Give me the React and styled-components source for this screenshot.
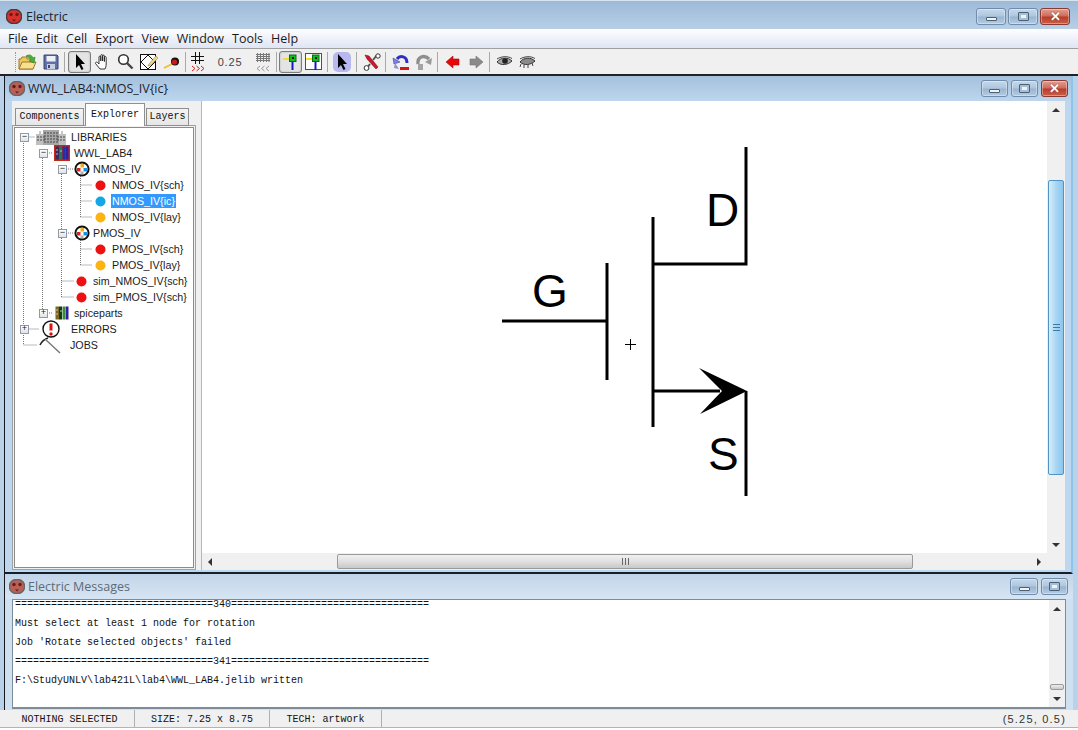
import React from "react";
import styled, { createGlobalStyle } from "styled-components";

const GlobalStyle = createGlobalStyle`
  html, body { margin: 0; padding: 0; background: #b9d1e9; }
  * { box-sizing: border-box; }
`;

const Shell = styled.div`
  width: 1078px;
  height: 730px;
  overflow: hidden;
  display: flex;
  flex-direction: column;
  background: #b9d1e9;
  font-family: "Open Sans", "Liberation Sans", sans-serif;
`;

const TitleBar = styled.div`
  height: 29px;
  flex: none;
  display: flex;
  align-items: center;
  padding: 3px 8px 0 6px;
  background: linear-gradient(#9dbad7, #b7cfe7);
  border-top: 1px solid #d7e3ef;
`;

const TitleText = styled.span`
  margin-left: ${(p) => p.$gap ?? 4}px;
  font-size: 12.5px;
  color: ${(p) => (p.$dim ? "#5d6a78" : "#1c2430")};
  flex: 1;
`;

const WinButtons = styled.div`
  display: flex;
  gap: ${(p) => p.$gap || 2}px;
`;

const WinButton = styled.div`
  width: ${(p) => p.$w || 30}px;
  height: 17px;
  border-radius: 3px;
  border: 1px solid ${(p) => (p.$kind === "close" ? "#8a3a30" : "#6f8dab")};
  display: flex;
  align-items: center;
  justify-content: center;
  background: ${(p) =>
    p.$kind === "close"
      ? "linear-gradient(#e0a094, #cf6a58 48%, #b83c28 52%, #c8604a)"
      : "linear-gradient(#c6d8ea, #aec6de 48%, #98b4d0 52%, #b4cce2)"};
  box-shadow: inset 0 0 0 1px rgba(255, 255, 255, 0.35);
`;

const MinGlyph = styled.i`
  display: block;
  width: 11px;
  height: 4px;
  margin-top: 4px;
  background: #eef3f8;
  border: 1px solid #4d5f73;
  border-radius: 1px;
`;

const MaxGlyph = styled.i`
  display: block;
  width: 11px;
  height: 9px;
  background: #eef3f8;
  border: 1px solid #4d5f73;
  border-radius: 1px;
  box-shadow: inset 0 0 0 2px #a6bfd8;
`;

const CloseGlyph = styled.span`
  font: bold 13px/1 "Liberation Sans", sans-serif;
  color: #fff;
  text-shadow: 0 0 1px #5a2018;
`;

const MenuBar = styled.div`
  height: 20px;
  flex: none;
  display: flex;
  align-items: center;
  gap: 8px;
  padding-left: 8px;
  background: linear-gradient(#ffffff, #f3f5fb 35%, #dfe5f4);
  border-bottom: 1px solid #a0a0a0;
`;

const MenuItem = styled.span`
  font-size: 12.5px;
  color: #1a1a1a;
`;

const ToolBar = styled.div`
  height: 27px;
  flex: none;
  display: flex;
  align-items: center;
  padding-left: 15px;
  background: #f0f0f0;
  border-bottom: 2px solid #1f2226;
`;

const Grip = styled.i`
  display: block;
  width: 1px;
  height: 20px;
  border-left: 1px dotted #999;
`;

const ToolSep = styled.i`
  display: block;
  width: 1px;
  height: 20px;
  margin: 0 ${(p) => p.$r ?? 3}px 0 ${(p) => p.$l ?? 2}px;
  background: #a8a8a8;
`;

const Tool = styled.div`
  width: 23px;
  height: 22px;
  flex: none;
  display: flex;
  align-items: center;
  justify-content: center;
  border-radius: 3px;
  ${(p) =>
    p.$on &&
    `background: #e4e4e4;
     border: 1px solid #7c7c7c;
     box-shadow: inset 0 0 2px #aaa;`}
`;

const GridValue = styled.span`
  width: 42px;
  text-align: center;
  font: 11px "Liberation Sans", sans-serif;
  letter-spacing: 0.8px;
  color: #444;
`;

const Desktop = styled.div`
  flex: 1;
  min-height: 0;
  display: flex;
  flex-direction: column;
  padding: 0 5px 0 4px;
`;

const CadWindow = styled.div`
  height: 498px;
  flex: none;
  display: flex;
  flex-direction: column;
  border-left: 1px solid #14181c;
  border-right: 2px solid #8ec4ea;
  border-bottom: 2px solid #14202c;
  background: #bcd7ef;
`;

const InnerTitle = styled.div`
  height: 25px;
  flex: none;
  display: flex;
  align-items: center;
  padding: 0 3px 0 4px;
  background: linear-gradient(#a4c0dc, #bdd6ee);
`;

const CadBody = styled.div`
  flex: 1;
  min-height: 0;
  display: flex;
  padding: 0 6px 2px 7px;
`;

const SidePanel = styled.div`
  width: 184px;
  flex: none;
  display: flex;
  flex-direction: column;
  background: #f0f0f0;
  padding-top: 2px;
`;

const Tabs = styled.div`
  height: 23px;
  flex: none;
  display: flex;
  align-items: flex-end;
  padding-left: 3px;
`;

const Tab = styled.div`
  position: relative;
  z-index: 1;
  width: ${(p) => p.$w}px;
  height: ${(p) => (p.$active ? 23 : 18)}px;
  margin-right: 1px;
  display: flex;
  align-items: center;
  justify-content: center;
  padding-bottom: 1px;
  font: 10px "Liberation Mono", monospace;
  color: #111;
  background: ${(p) => (p.$active ? "#fff" : "linear-gradient(#f4f4f4, #e6e6e6)")};
  border: 1px solid #8e8f8f;
  border-bottom: ${(p) => (p.$active ? "none" : "1px solid #8e8f8f")};
`;

const TreeFrame = styled.div`
  flex: 1;
  min-height: 0;
  border: 1px solid #a0a0a0;
  padding: 1px;
  background: #f0f0f0;
  margin-top: -1px;
`;

const TreeBox = styled.div`
  position: relative;
  height: 100%;
  background: #fff;
  border: 1px solid #8c8c8c;
  padding-top: 1px;
`;

const TreeLines = styled.svg`
  position: absolute;
  left: 0;
  top: 0;
`;

const TreeRow = styled.div`
  position: relative;
  height: 16px;
  display: flex;
  align-items: center;
  padding-left: ${(p) => p.$pad}px;
`;

const Expander = styled.i`
  display: flex;
  flex: none;
  align-items: center;
  justify-content: center;
  width: 9px;
  height: 9px;
  margin-right: ${(p) => p.$gap}px;
  border: 1px solid #8e9aa6;
  background: linear-gradient(#fff, #dfe3e8);
  font: normal 9px/1 "Liberation Mono", monospace;
  color: #222;
`;

const TreeIcon = styled.span`
  display: flex;
  flex: none;
  justify-content: center;
  width: ${(p) => p.$w}px;
  margin-right: ${(p) => p.$gap}px;
`;

const TreeLabel = styled.span`
  font: 10.7px "Liberation Sans", sans-serif;
  color: ${(p) => (p.$sel ? "#fff" : "#1a1a1a")};
  background: ${(p) => (p.$sel ? "#3399ff" : "transparent")};
  padding: 1px;
  white-space: nowrap;
`;

const Divider = styled.div`
  width: 6px;
  flex: none;
  background: #f0f0f0;
  border-right: 1px solid #b8b8b8;
`;

const CanvasPane = styled.div`
  flex: 1;
  min-width: 0;
  display: grid;
  grid-template-columns: 1fr 18px;
  grid-template-rows: 1fr 17px;
  background: #f0f0f0;
`;

const Canvas = styled.svg`
  display: block;
  width: 100%;
  height: 100%;
  background: #fff;
`;

const VScroll = styled.div`
  display: flex;
  flex-direction: column;
  align-items: stretch;
  background: #f0f0f0;
`;

const HScroll = styled.div`
  display: flex;
  background: #f0f0f0;
`;

const ArrowCell = styled.div`
  width: ${(p) => (p.$h ? "16px" : "auto")};
  height: ${(p) => (p.$h ? "auto" : "17px")};
  flex: none;
  display: flex;
  align-items: center;
  justify-content: center;
`;

const Tri = styled.i`
  display: block;
  width: 0;
  height: 0;
  border-style: solid;
  border-color: transparent;
  ${(p) => p.$dir === "up" && "border-width: 0 4px 4px; border-bottom-color: #333;"}
  ${(p) => p.$dir === "down" && "border-width: 4px 4px 0; border-top-color: #333;"}
  ${(p) => p.$dir === "left" && "border-width: 4px 4px 4px 0; border-right-color: #333;"}
  ${(p) => p.$dir === "right" && "border-width: 4px 0 4px 4px; border-left-color: #333;"}
`;

const ScrollGap = styled.div`
  ${(p) => (p.$size ? `flex: none; ${p.$h ? "width" : "height"}: ${p.$size}px;` : "flex: 1;")}
`;

const VThumb = styled.div`
  height: ${(p) => p.$size}px;
  flex: none;
  margin: 0 1px;
  border: 1px solid ${(p) => (p.$hot ? "#4f94c4" : "#9a9a9a")};
  border-radius: 2px;
  display: flex;
  align-items: center;
  justify-content: center;
  background: ${(p) =>
    p.$hot
      ? "linear-gradient(90deg, #d8eefb, #a8d6f4 50%, #8cc6ee)"
      : "linear-gradient(#eee, #c8c8c8)"};
`;

const HThumb = styled.div`
  width: ${(p) => p.$size}px;
  flex: none;
  margin: 1px 0;
  border: 1px solid #9a9a9a;
  border-radius: 2px;
  display: flex;
  align-items: center;
  justify-content: center;
  background: linear-gradient(#f0f0f0, #e0e0e0 50%, #c8c8c8);
`;

const ThumbGrip = styled.i`
  display: block;
  width: 7px;
  height: 7px;
  background: ${(p) =>
    p.$h
      ? "repeating-linear-gradient(90deg, #666 0 1px, transparent 1px 3px)"
      : "repeating-linear-gradient(#3a7ca8 0 1px, transparent 1px 3px)"};
`;

const MessagesWindow = styled.div`
  flex: 1;
  min-height: 0;
  display: flex;
  flex-direction: column;
  padding-bottom: 1px;
  border-left: 1px solid #14181c;
  background: #cfe0f0;
`;

const MessagesTitle = styled(InnerTitle)`
  padding-right: 5px;
  background: linear-gradient(#c2d5e8, #d6e5f3);
`;

const MessagesBody = styled.div`
  flex: 1;
  min-height: 0;
  display: flex;
  margin: 0 7px 0 7px;
  background: #fff;
  border: 1px solid #7e8b99;
  border-bottom-width: 2px;
`;

const LogText = styled.div`
  flex: 1;
  height: 100%;
  overflow: hidden;
  padding-left: 2px;
  margin-top: -5px;
`;

const LogLine = styled.div`
  height: 19px;
  font: 10px/19px "Liberation Mono", monospace;
  color: #111;
  white-space: pre;
`;

const LogScroll = styled(VScroll)`
  width: 16px;
  flex: none;
`;

const StatusBar = styled.div`
  height: 20px;
  flex: none;
  display: flex;
  padding-left: 5px;
  background: #f0f0f0;
  border-bottom: 2px solid #fff;
  box-shadow: inset 0 -1px 0 #b4b4b4;
`;

const StatusCell = styled.div`
  width: ${(p) => p.$w}px;
  flex: none;
  display: flex;
  align-items: center;
  justify-content: center;
  padding-top: 1px;
  font: 10px "Liberation Mono", monospace;
  color: #111;
  border-right: 1px solid #b0b0b0;
  margin-bottom: 1px;
`;

const Coords = styled.div`
  flex: 1;
  text-align: right;
  padding-right: 12px;
  font: 11px/19px "Liberation Sans", sans-serif;
  letter-spacing: 1.2px;
  color: #333;
`;

/* icons */

const AppIcon = ({ dim }) => (
  <svg width="16" height="15" viewBox="0 0 16 15">
    <rect x="0.5" y="0.5" width="15" height="14" rx="6.5" fill={dim ? "#b86058" : "#d8302c"} stroke={dim ? "#666" : "#4a3a3a"} strokeWidth="1.4" />
    <circle cx="5" cy="5.5" r="1.7" fill="#6b1a18" />
    <circle cx="11" cy="5.5" r="1.7" fill="#6b1a18" />
    <path d="M6 10.5 H10 L8 12.5Z" fill="#6b1a18" />
  </svg>
);

const OpenIcon = () => (
  <svg width="20" height="18" viewBox="0 0 20 18">
    <path d="M1 16 V6 H3 L4 4 H9 V6 H15 V16Z" fill="#f0c860" stroke="#9a7a28" />
    <path d="M1 16 L4 9 H18 L15 16Z" fill="#f8e090" stroke="#9a7a28" />
    <path d="M8 3 C11 1 14 2 15 5 L17 4 L16 10 L11 8 L13 7 C12 5 10 4 8 3Z" fill="#4caf3a" stroke="#2a7a20" strokeWidth="0.6" />
  </svg>
);

const SaveIcon = () => (
  <svg width="16" height="16" viewBox="0 0 16 16">
    <path d="M1 1 H14 L15 2 V15 H1Z" fill="#5f6fa8" stroke="#3c4678" />
    <rect x="3.5" y="2" width="9" height="5.5" fill="#eef0f8" />
    <rect x="4" y="10" width="8" height="5" fill="#c8cee4" />
    <rect x="5" y="11" width="2" height="3" fill="#3c4678" />
  </svg>
);

const PointerIcon = ({ glow }) => (
  <svg width="18" height="20" viewBox="0 0 18 20">
    {glow && <rect x="0" y="0" width="18" height="20" rx="5" fill="#b8b8f0" />}
    <path d="M5 2 V16 L8 13 L10.5 18 L12.5 17 L10 12 H14Z" fill="#000" />
  </svg>
);

const HandIcon = () => (
  <svg width="17" height="18" viewBox="0 0 17 18" fill="#fff" stroke="#222" strokeWidth="0.9">
    <path d="M6 16 L1.5 10.5 C1 9.5 2.5 8.5 3.5 9.5 L5 11 V4 C5 2.8 6.8 2.8 6.8 4 V8 V2.5 C6.8 1.3 8.6 1.3 8.6 2.5 V8 V3 C8.6 1.8 10.4 1.8 10.4 3 V8.5 V4.5 C10.4 3.3 12.2 3.3 12.2 4.5 V11 C12.2 13.5 11.5 15 11 16Z" />
  </svg>
);

const LensIcon = () => (
  <svg width="17" height="17" viewBox="0 0 17 17" fill="none">
    <circle cx="6.5" cy="6.5" r="4.8" stroke="#333" strokeWidth="1.6" fill="#fff" />
    <path d="M10 10 L15.5 15.5" stroke="#444" strokeWidth="2.4" />
  </svg>
);

const EditIcon = () => (
  <svg width="18" height="17" viewBox="0 0 18 17">
    <rect x="0.5" y="1.5" width="15" height="15" fill="#fff" stroke="#111" />
    <path d="M8 2 L15 9 L8 16 L1 9Z" fill="none" stroke="#111" />
    <path d="M9 11 L16 3 L18 5 L11 12 L8 13Z" fill="#f0d890" stroke="#a08838" strokeWidth="0.6" />
  </svg>
);

const ProbeIcon = () => (
  <svg width="18" height="14" viewBox="0 0 18 14">
    <path d="M1 13 L9 9" stroke="#f0c020" strokeWidth="1.6" />
    <circle cx="12" cy="6.5" r="4" fill="#111" />
    <circle cx="11.5" cy="7" r="2.6" fill="#d01818" />
  </svg>
);

const GridIcon = ({ dense }) => (
  <svg width="14" height="20" viewBox="0 0 14 20" fill="none">
    {dense ? (
      <path d="M0 2.5 H14 M0 4.5 H14 M0 6.5 H14 M0 8.5 H14 M1.5 1 V10 M4.5 1 V10 M7.5 1 V10 M10.5 1 V10 M13 1 V10" stroke="#777" />
    ) : (
      <path d="M0 4.5 H13 M0 8.5 H13 M4.5 0 V12 M8.5 0 V12" stroke="#111" />
    )}
    {dense ? (
      <path d="M4 14 L1 16.5 L4 19 M8.5 14 L5.5 16.5 L8.5 19 M13 14 L10 16.5 L13 19" stroke="#999" />
    ) : (
      <path d="M1 14 L4 16.5 L1 19 M5.5 14 L8.5 16.5 L5.5 19 M10 14 L13 16.5 L10 19" stroke="#d02020" />
    )}
  </svg>
);

const NodeIcon = ({ boxed }) => (
  <svg width="17" height="17" viewBox="0 0 17 17">
    {boxed && <rect x="0.5" y="0.5" width="16" height="16" fill="#fff" stroke="#d01818" />}
    <path d="M1 6 H9" stroke="#f4e020" strokeWidth="2" />
    <path d="M10.5 8 V17" stroke="#1818c8" strokeWidth="2" />
    <rect x="7.5" y="2" width="6.5" height="6.5" fill="#10c020" stroke="#0a6a14" />
    <rect x="10" y="4" width="2" height="2" fill="#111" />
  </svg>
);

const ToolsIcon = () => (
  <svg width="18" height="18" viewBox="0 0 18 18" fill="none">
    <path d="M14 2 L10 7 M7 11 L4 15" stroke="#555" strokeWidth="2" />
    <circle cx="15" cy="3" r="2.2" fill="#fff" stroke="#333" />
    <circle cx="3.5" cy="15" r="2.4" fill="#fff" stroke="#333" />
    <path d="M2 2 L6 3 L15 14 L13 16 L4 6Z" fill="#c8182c" stroke="#801020" strokeWidth="0.6" />
  </svg>
);

const UndoIcon = () => (
  <svg width="18" height="18" viewBox="0 0 18 18" fill="none">
    <path d="M15 10 C15 3 8 2 5 6" stroke="#3030c0" strokeWidth="3" />
    <path d="M1 5 L8 9 L2 11Z" fill="#8080e0" stroke="#4040a0" strokeWidth="0.6" />
    <path d="M3 10 L7 16 L2 15Z" fill="#9090d8" />
    <rect x="8" y="14" width="9" height="3" fill="#d01818" />
  </svg>
);

const RedoIcon = () => (
  <svg width="18" height="18" viewBox="0 0 18 18" fill="none">
    <path d="M3 11 C2 4 9 1 14 6" stroke="#8e8e8e" strokeWidth="3.4" />
    <path d="M17 5 L10 9 L16 12Z" fill="#9a9a9a" />
    <path d="M3 11 H8 V17 H3Z" fill="#a4a4a4" />
  </svg>
);

const ArrowIcon = ({ left, off }) => (
  <svg width="14" height="14" viewBox="0 0 14 14">
    <path d={left ? "M0 7 L7 1 V4 H13 V10 H7 V13Z" : "M14 7 L7 1 V4 H1 V10 H7 V13Z"} fill={off ? "#8a8a8a" : "#e80808"} stroke={off ? "#777" : "#a01010"} strokeWidth="0.6" />
  </svg>
);

const EyeIcon = ({ closed }) => (
  <svg width="17" height="12" viewBox="0 0 17 12" fill="none">
    <path d="M1 6 C5 1 12 1 16 5 C12 9 5 10 1 6Z" fill={closed ? "#8a8a8a" : "#aaa"} stroke="#333" />
    {closed ? (
      <path d="M2 8 L1 11 M5 9 L5 12 M9 9 L9 12 M13 7 L14 10" stroke="#444" />
    ) : (
      <circle cx="9" cy="5" r="2.8" fill="#222" />
    )}
    <path d="M1 3 C6 0 12 0 16 2.5" stroke="#444" />
  </svg>
);

const LibraryIcon = () => (
  <svg width="30" height="16" viewBox="0 0 30 16">
    <rect x="0" y="5" width="10" height="11" fill="#c0c0c0" />
    <rect x="20" y="5" width="10" height="11" fill="#c0c0c0" />
    <rect x="7" y="1" width="16" height="15" fill="#a8a8a8" />
    <rect x="3" y="2" width="2" height="3" fill="#c8c8c8" />
    <rect x="25" y="2" width="2" height="3" fill="#c8c8c8" />
    <path d="M8 4 H22 M8 7 H22 M8 10 H22 M8 13 H22 M1 8 H9 M1 11 H9 M21 8 H29 M21 11 H29" stroke="#444" strokeDasharray="2 1" />
  </svg>
);

const BooksIcon = ({ framed }) => (
  <svg width="16" height="16" viewBox="0 0 16 16">
    {framed && <rect x="0" y="0" width="16" height="16" fill="#c82818" />}
    <rect x="1.5" y="1.5" width="3.5" height="13" fill={framed ? "#3a2a60" : "#7a6a20"} />
    <rect x="5" y="1.5" width="3" height="13" fill={framed ? "#1a7a50" : "#183a18"} />
    <rect x="8.5" y="1.5" width="2.5" height="13" fill={framed ? "#2030a8" : "#3a8a3a"} />
    <rect x="11.5" y="1.5" width="3" height="13" fill="#3020a0" />
    <path d="M2 5 H4 M2 9 H4 M6 6 H8" stroke="#ddd" strokeWidth="0.8" />
  </svg>
);

const CellIcon = () => (
  <svg width="16" height="16" viewBox="0 0 16 16">
    <circle cx="8" cy="8" r="6.6" fill="#fff" stroke="#111" strokeWidth="2" />
    <rect x="6.5" y="3" width="3.5" height="3.5" fill="#f0b010" />
    <rect x="3" y="7" width="3.5" height="3.5" fill="#e02018" />
    <rect x="9.5" y="7" width="3.5" height="3.5" fill="#1890e0" />
    <rect x="6.5" y="10.5" width="3" height="2.5" fill="#b0b0b0" />
  </svg>
);

const Dot = ({ color }) => (
  <svg width="11" height="11" viewBox="0 0 11 11">
    <circle cx="5.5" cy="5.5" r="5" fill={color} />
  </svg>
);

const ErrorsIcon = () => (
  <svg width="18" height="18" viewBox="0 0 18 18">
    <circle cx="9" cy="9" r="8" fill="#fff" stroke="#111" strokeWidth="1.4" />
    <path d="M9 3.5 V10.5" stroke="#e01010" strokeWidth="3" />
    <circle cx="9" cy="14" r="1.7" fill="#e01010" />
  </svg>
);

const JobsIcon = () => (
  <svg width="22" height="18" viewBox="0 0 22 18" fill="none">
    <path d="M1 9 C3 5 6 3 9 2" stroke="#222" strokeWidth="1.6" />
    <path d="M6 3 L21 17" stroke="#777" strokeWidth="1.4" />
  </svg>
);

const RED = "#ee1111";
const AMBER = "#ffb310";
const CYAN = "#10a8e8";

const treeRows = [
  { label: "LIBRARIES", pad: 5, exp: "−", expGap: 7, w: 30, gap: 4, icon: <LibraryIcon /> },
  { label: "WWL_LAB4", pad: 24, exp: "−", expGap: 6, w: 16, gap: 3, icon: <BooksIcon framed /> },
  { label: "NMOS_IV", pad: 43, exp: "−", expGap: 7, w: 16, gap: 2, icon: <CellIcon /> },
  { label: "NMOS_IV{sch}", pad: 77, w: 16, gap: 3, icon: <Dot color={RED} /> },
  { label: "NMOS_IV{ic}", pad: 77, w: 16, gap: 3, icon: <Dot color={CYAN} />, sel: true },
  { label: "NMOS_IV{lay}", pad: 77, w: 16, gap: 3, icon: <Dot color={AMBER} /> },
  { label: "PMOS_IV", pad: 43, exp: "−", expGap: 7, w: 16, gap: 2, icon: <CellIcon /> },
  { label: "PMOS_IV{sch}", pad: 77, w: 16, gap: 3, icon: <Dot color={RED} /> },
  { label: "PMOS_IV{lay}", pad: 77, w: 16, gap: 3, icon: <Dot color={AMBER} /> },
  { label: "sim_NMOS_IV{sch}", pad: 58, w: 16, gap: 3, icon: <Dot color={RED} /> },
  { label: "sim_PMOS_IV{sch}", pad: 58, w: 16, gap: 3, icon: <Dot color={RED} /> },
  { label: "spiceparts", pad: 24, exp: "+", expGap: 6, w: 16, gap: 3, icon: <BooksIcon /> },
  { label: "ERRORS", pad: 5, exp: "+", expGap: 7, w: 30, gap: 4, icon: <ErrorsIcon /> },
  { label: "JOBS", pad: 20, w: 30, gap: 4, icon: <JobsIcon /> },
];

const menus = ["File", "Edit", "Cell", "Export", "View", "Window", "Tools", "Help"];

const rule = (n) => "=".repeat(33) + n + "=".repeat(33);

const logLines = [
  rule(340),
  "Must select at least 1 node for rotation",
  "Job 'Rotate selected objects' failed",
  rule(341),
  "F:\\StudyUNLV\\lab421L\\lab4\\WWL_LAB4.jelib written",
];

// connector lines, in page coordinates
const guides =
  "M24.5 143V345 M24.5 137H36 M24.5 329H40 M24.5 345H38 " +
  "M43.5 158V313 M48 153H54 M48 313H54 " +
  "M62.5 174V297 M67 169H74 M67 233H74 M62.5 281H75 M62.5 297H75 " +
  "M81.5 174V217 M81.5 185H93 M81.5 201H93 M81.5 217H93 " +
  "M81.5 238V265 M81.5 249H93 M81.5 265H93";

const Toolbar = () => (
  <ToolBar>
    <Grip />
    <Tool><OpenIcon /></Tool>
    <Tool><SaveIcon /></Tool>
    <ToolSep />
    <Tool $on><PointerIcon /></Tool>
    <Tool><HandIcon /></Tool>
    <Tool><LensIcon /></Tool>
    <Tool><EditIcon /></Tool>
    <Tool><ProbeIcon /></Tool>
    <ToolSep $r={0} />
    <Tool><GridIcon /></Tool>
    <GridValue>0.25</GridValue>
    <Tool><GridIcon dense /></Tool>
    <ToolSep $r={2} />
    <Tool $on><NodeIcon /></Tool>
    <Tool><NodeIcon boxed /></Tool>
    <ToolSep $r={2} />
    <Tool><PointerIcon glow /></Tool>
    <ToolSep $l={3} />
    <Tool><ToolsIcon /></Tool>
    <ToolSep />
    <Tool><UndoIcon /></Tool>
    <Tool><RedoIcon /></Tool>
    <ToolSep />
    <Tool><ArrowIcon left /></Tool>
    <Tool><ArrowIcon off /></Tool>
    <ToolSep />
    <Tool><EyeIcon /></Tool>
    <Tool><EyeIcon closed /></Tool>
  </ToolBar>
);

const Explorer = () => (
  <SidePanel>
    <Tabs>
      <Tab $w={69}>Components</Tab>
      <Tab $w={60} $active>Explorer</Tab>
      <Tab $w={43}>Layers</Tab>
    </Tabs>
    <TreeFrame>
      <TreeBox>
        <TreeLines width="178" height="240" viewBox="16 128 178 240">
          <path d={guides} stroke="#777" strokeDasharray="1 1" fill="none" />
        </TreeLines>
        {treeRows.map((r) => (
          <TreeRow key={r.label} $pad={r.pad}>
            {r.exp && <Expander $gap={r.expGap}>{r.exp}</Expander>}
            <TreeIcon $w={r.w} $gap={r.gap}>{r.icon}</TreeIcon>
            <TreeLabel $sel={r.sel}>{r.label}</TreeLabel>
          </TreeRow>
        ))}
      </TreeBox>
    </TreeFrame>
  </SidePanel>
);

const Schematic = () => (
  <Canvas viewBox="202 101 845 452">
    <g stroke="#000" strokeWidth="3" fill="none">
      <path d="M746 147 V264 H653" />
      <path d="M653 217 V427" />
      <path d="M607 263 V380" />
      <path d="M502 321 H607" />
      <path d="M653 391 H720" />
      <path d="M746 391 V496" />
    </g>
    <path d="M699 368 L747 391 L700 414 L722 391Z" fill="#000" />
    <path d="M625 344.5 H636 M630.5 339 V350" stroke="#000" />
    <g fontFamily="Liberation Sans, sans-serif" fontSize="46" fill="#000">
      <text x="706" y="226">D</text>
      <text x="532" y="307">G</text>
      <text x="708" y="470">S</text>
    </g>
  </Canvas>
);

export default function App() {
  return (
    <Shell>
      <GlobalStyle />
      <TitleBar>
        <AppIcon />
        <TitleText>Electric</TitleText>
        <WinButtons>
          <WinButton><MinGlyph /></WinButton>
          <WinButton><MaxGlyph /></WinButton>
          <WinButton $kind="close"><CloseGlyph>✕</CloseGlyph></WinButton>
        </WinButtons>
      </TitleBar>
      <MenuBar>
        {menus.map((m) => <MenuItem key={m}>{m}</MenuItem>)}
      </MenuBar>
      <Toolbar />
      <Desktop>
        <CadWindow>
          <InnerTitle>
            <AppIcon dim />
            <TitleText $gap={3}>WWL_LAB4:NMOS_IV{"{ic}"}</TitleText>
            <WinButtons $gap={3}>
              <WinButton $w={27}><MinGlyph /></WinButton>
              <WinButton $w={27}><MaxGlyph /></WinButton>
              <WinButton $w={27} $kind="close"><CloseGlyph>✕</CloseGlyph></WinButton>
            </WinButtons>
          </InnerTitle>
          <CadBody>
            <Explorer />
            <Divider />
            <CanvasPane>
              <Schematic />
              <VScroll>
                <ArrowCell><Tri $dir="up" /></ArrowCell>
                <ScrollGap $size={62} />
                <VThumb $size={295} $hot><ThumbGrip /></VThumb>
                <ScrollGap />
                <ArrowCell><Tri $dir="down" /></ArrowCell>
              </VScroll>
              <HScroll>
                <ArrowCell $h><Tri $dir="left" /></ArrowCell>
                <ScrollGap $h $size={119} />
                <HThumb $size={576}><ThumbGrip $h /></HThumb>
                <ScrollGap />
                <ArrowCell $h><Tri $dir="right" /></ArrowCell>
              </HScroll>
              <div />
            </CanvasPane>
          </CadBody>
        </CadWindow>
        <MessagesWindow>
          <MessagesTitle>
            <AppIcon dim />
            <TitleText $gap={3} $dim>Electric Messages</TitleText>
            <WinButtons $gap={3}>
              <WinButton $w={28}><MinGlyph /></WinButton>
              <WinButton $w={27}><MaxGlyph /></WinButton>
            </WinButtons>
          </MessagesTitle>
          <MessagesBody>
            <LogText>
              {logLines.map((l) => <LogLine key={l}>{l}</LogLine>)}
            </LogText>
            <LogScroll>
              <ArrowCell><Tri $dir="up" /></ArrowCell>
              <ScrollGap $size={67} />
              <VThumb $size={6} />
              <ScrollGap />
              <ArrowCell><Tri $dir="down" /></ArrowCell>
            </LogScroll>
          </MessagesBody>
        </MessagesWindow>
      </Desktop>
      <StatusBar>
        <StatusCell $w={130}>NOTHING SELECTED</StatusCell>
        <StatusCell $w={135}>SIZE: 7.25 x 8.75</StatusCell>
        <StatusCell $w={112}>TECH: artwork</StatusCell>
        <Coords>(5.25, 0.5)</Coords>
      </StatusBar>
    </Shell>
  );
}
